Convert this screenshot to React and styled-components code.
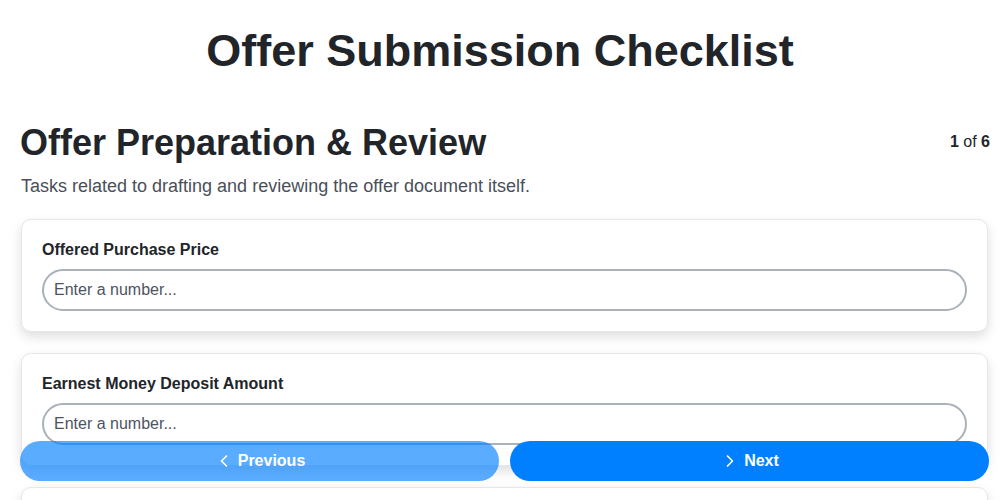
import React, { useState } from "react";
import styled, { createGlobalStyle } from "styled-components";
import { ChevronLeft, ChevronRight } from "lucide-react";

const GlobalStyle = createGlobalStyle`
  body {
    margin: 0;
    background: #ffffff;
    font-family: "Liberation Sans", Arial, sans-serif;
    color: #212529;
  }
  * {
    box-sizing: border-box;
  }
`;

const Title = styled.h1`
  margin: 0;
  padding-top: 25px;
  font-size: 45px;
  line-height: 52px;
  font-weight: 700;
  text-align: center;
  color: #212529;
`;

const Page = styled.div`
  padding: 0 12px 80px 21px;
`;

const SectionHeader = styled.div`
  display: flex;
  justify-content: space-between;
  align-items: flex-start;
  margin-top: 45px;
`;

const SectionTitle = styled.h2`
  margin: 0 0 0 -1px;
  font-size: 36px;
  line-height: 42px;
  font-weight: 700;
  color: #212529;
`;

const Progress = styled.div`
  font-size: 16px;
  line-height: 20px;
  margin-top: 10px;
  margin-right: -2px;
  color: #212529;

  b {
    font-weight: 700;
  }
`;

const Description = styled.p`
  margin: 11px 0 22px;
  font-size: 18px;
  line-height: 22px;
  color: #4a4f59;
`;

const Card = styled.div`
  background: #ffffff;
  border: 1px solid #e6e6eb;
  border-radius: 10px;
  padding: 20px;
  margin-bottom: 21px;
  box-shadow: 0 5px 12px rgba(0, 0, 0, 0.13);
`;

const Label = styled.label`
  display: block;
  font-size: 16px;
  line-height: 19px;
  font-weight: 700;
  color: #212529;
  margin-bottom: 10px;
`;

const Input = styled.input`
  display: block;
  width: 100%;
  height: 42px;
  border: 2px solid #a9b1ba;
  border-radius: 21px;
  padding: 0 10px;
  font-family: "Liberation Sans", Arial, sans-serif;
  font-size: 16px;
  color: #212529;
  background: #ffffff;
  outline: none;

  &::placeholder {
    color: #4d5362;
  }
`;

const Nav = styled.div`
  position: fixed;
  left: 20px;
  right: 11px;
  bottom: 19px;
  display: grid;
  grid-template-columns: 1fr 1fr;
  gap: 11px;
`;

const NavButton = styled.button`
  height: 40px;
  border: none;
  border-radius: 20px;
  background: #0080ff;
  color: #ffffff;
  font-family: "Liberation Sans", Arial, sans-serif;
  font-size: 16px;
  font-weight: 700;
  display: flex;
  align-items: center;
  justify-content: center;
  gap: 4px;
  cursor: pointer;
  opacity: ${(p) => (p.disabled ? 0.65 : 1)};
`;

const fields = [
  "Offered Purchase Price",
  "Earnest Money Deposit Amount",
  "Closing Date",
  "Financing Contingency Period",
];

const App = () => {
  const [values, setValues] = useState({});

  return (
    <>
      <GlobalStyle />
      <Title>Offer Submission Checklist</Title>
      <Page>
        <SectionHeader>
          <SectionTitle>Offer Preparation &amp; Review</SectionTitle>
          <Progress>
            <b>1</b> of <b>6</b>
          </Progress>
        </SectionHeader>
        <Description>
          Tasks related to drafting and reviewing the offer document itself.
        </Description>

        {fields.map((name) => (
          <Card key={name}>
            <Label>{name}</Label>
            <Input
              type="text"
              placeholder="Enter a number..."
              value={values[name] || ""}
              onChange={(e) =>
                setValues((prev) => ({ ...prev, [name]: e.target.value }))
              }
            />
          </Card>
        ))}
      </Page>

      <Nav>
        <NavButton disabled>
          <ChevronLeft size={20} strokeWidth={2} />
          Previous
        </NavButton>
        <NavButton>
          <ChevronRight size={20} strokeWidth={2} />
          Next
        </NavButton>
      </Nav>
    </>
  );
};

export default App;
